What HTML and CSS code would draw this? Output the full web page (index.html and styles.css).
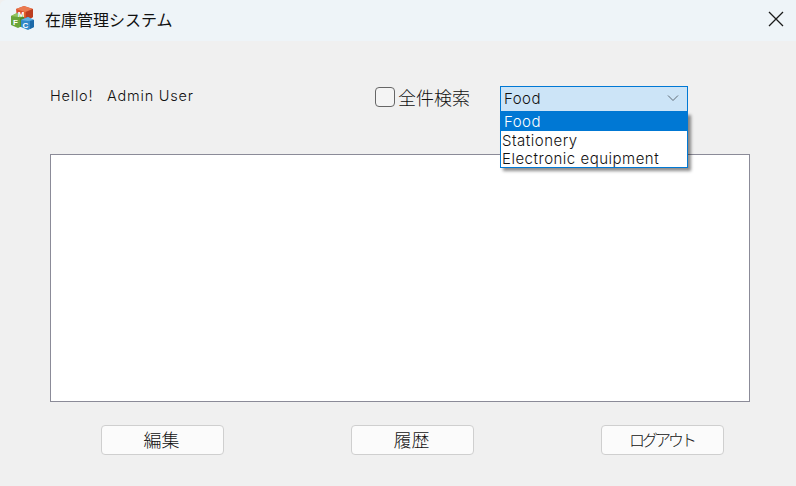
FILE: index.html
```html
<!DOCTYPE html>
<html lang="ja">
<head>
    <meta charset="UTF-8">
    <meta name="viewport" content="width=device-width, initial-scale=1.0">
    <title>在庫管理システム</title>
    <link rel="stylesheet" href="styles.css">
</head>
<body>
    <div class="window">
        <header class="titlebar">
            <svg class="app-icon" width="24" height="25" viewBox="0 0 24 25">
                <!-- M cube -->
                <path d="M5 3 L13 0 L22 3 L22 11 L14 15 L6 12 Z" fill="#d9512c"/>
                <path d="M5 3 L13 0 L22 3 L14 6 Z" fill="#ea7a50"/>
                <path d="M15 6 L22 3 L22 11 L15 15 Z" fill="#bb3d20"/>
                <!-- F cube -->
                <path d="M0 10 L6 7 L13 10 L13 19 L7 22 L0 19 Z" fill="#6aa53a"/>
                <path d="M0 10 L6 7 L13 10 L7 11 Z" fill="#94c45f"/>
                <path d="M9 12 L13 10 L13 19 L9 21 Z" fill="#4f8a2b"/>
                <!-- C cube -->
                <path d="M10 14 L17 11 L23 14 L23 21 L17 24 L10 21 Z" fill="#3188c8"/>
                <path d="M10 14 L17 11 L23 14 L17 15 Z" fill="#63b1e2"/>
                <path d="M19 15 L23 14 L23 21 L19 23 Z" fill="#1c69a8"/>
                <text class="icon-letter" x="10" y="11">M</text>
                <text class="icon-letter" x="4.5" y="19">F</text>
                <text class="icon-letter" x="14.5" y="21.5">C</text>
            </svg>
            <span class="title-text">在庫管理システム</span>
            <svg class="close-icon" width="16" height="16" viewBox="0 0 16 16">
                <path d="M1 1 L15 15 M15 1 L1 15" stroke="#1a1a1a" stroke-width="1.3" fill="none"/>
            </svg>
        </header>

        <main class="content">
            <div class="toolbar">
                <span class="greeting"><span class="hello">Hello!</span>Admin User</span>
                <label class="check-all">
                    <span class="checkbox"></span>
                    <span>全件検索</span>
                </label>
                <div class="combo">
                    <div class="combo-box">
                        <span>Food</span>
                        <svg width="12" height="8" viewBox="0 0 12 8">
                            <path d="M1 1.5 L6 6.5 L11 1.5" stroke="#5f6b76" stroke-width="1" fill="none"/>
                        </svg>
                    </div>
                    <ul class="combo-list">
                        <li class="selected">Food</li>
                        <li>Stationery</li>
                        <li>Electronic equipment</li>
                    </ul>
                </div>
            </div>

            <div class="list-view"></div>

            <div class="actions">
                <button>編集</button>
                <button>履歴</button>
                <button class="kana-label">ログアウト</button>
            </div>
        </main>
    </div>
</body>
</html>
```

FILE: styles.css
```css
/* Window */
html, body {
    margin: 0;
    padding: 0;
    background-color: #f0f0f0;
}
.window {
    width: 796px;
    height: 486px;
    overflow: hidden;
    background-color: #f0f0f0;
    color: #111;
    font-family: Inter, "Noto Sans CJK JP", sans-serif;
    font-weight: 300;
    font-size: 15px;
    letter-spacing: 0.5px;
}

/* Title bar */
.titlebar {
    display: flex;
    align-items: center;
    height: 41px;
    padding: 0 12px 4px 11px;
    background-color: #eef4f8;
    border-top-left-radius: 6px;
    box-sizing: border-box;
    letter-spacing: 0;
}
.app-icon {
    margin-right: 10px;
}
.icon-letter {
    font-family: "Liberation Sans", sans-serif;
    font-size: 8px;
    font-weight: 700;
    text-anchor: middle;
    fill: #fff;
}
.title-text {
    flex: 1;
    font-family: "Noto Sans CJK JP", sans-serif;
    font-size: 16px;
    font-weight: 400;
}

/* Content */
.content {
    padding: 45px 46px 0 50px;
}
.toolbar {
    display: flex;
    align-items: flex-start;
    height: 68px;
}
.greeting {
    width: 325px;
    font-size: 14.5px;
    line-height: 20px;
    letter-spacing: 0.8px;
    white-space: nowrap;
}
.hello {
    display: inline-block;
    width: 57px;
}
.check-all {
    display: flex;
    align-items: center;
    gap: 3px;
    width: 125px;
    height: 22px;
    font-family: "Noto Sans CJK JP", sans-serif;
    font-size: 18px;
    line-height: 22px;
    letter-spacing: 0;
}
.checkbox {
    width: 18px;
    height: 18px;
    border: 1px solid #666;
    border-radius: 4px;
    background-color: #f4f4f4;
}

/* Combo box */
.combo {
    position: relative;
    width: 188px;
}
.combo-box {
    display: flex;
    align-items: center;
    justify-content: space-between;
    height: 26px;
    padding: 0 8px 2px 3px;
    box-sizing: border-box;
    border: 1px solid #0078d4;
    background-color: #cce4f7;
}
.combo-list {
    position: absolute;
    left: 0;
    top: 26px;
    width: 188px;
    margin: 0;
    padding: 0;
    box-sizing: border-box;
    list-style: none;
    background-color: #fff;
    border: 1px solid #0078d4;
    border-top: none;
    box-shadow: 3px 3px 3px rgba(0, 0, 0, 0.45);
    line-height: 20px;
}
.combo-list li {
    height: 18px;
    padding-left: 1px;
    white-space: nowrap;
}
.combo-list .selected {
    height: 19px;
    padding-left: 3px;
    background-color: #0078d4;
    color: #fff;
}

/* List */
.list-view {
    width: 700px;
    height: 248px;
    box-sizing: border-box;
    background-color: #fff;
    border: 1px solid #8b8b98;
}

/* Buttons */
.actions {
    display: flex;
    justify-content: space-between;
    margin-top: 23px;
    padding: 0 26px 0 51px;
}
.actions button {
    width: 123px;
    height: 30px;
    padding: 0 2px 2px 0;
    background-color: #fbfbfb;
    border: 1px solid #cfcfcf;
    border-radius: 4px;
    color: #111;
    font-family: "Noto Sans CJK JP", sans-serif;
    font-weight: 300;
    font-size: 18px;
    letter-spacing: 0;
}
.actions .kana-label {
    font-size: 16px;
    letter-spacing: -3px;
}
```
